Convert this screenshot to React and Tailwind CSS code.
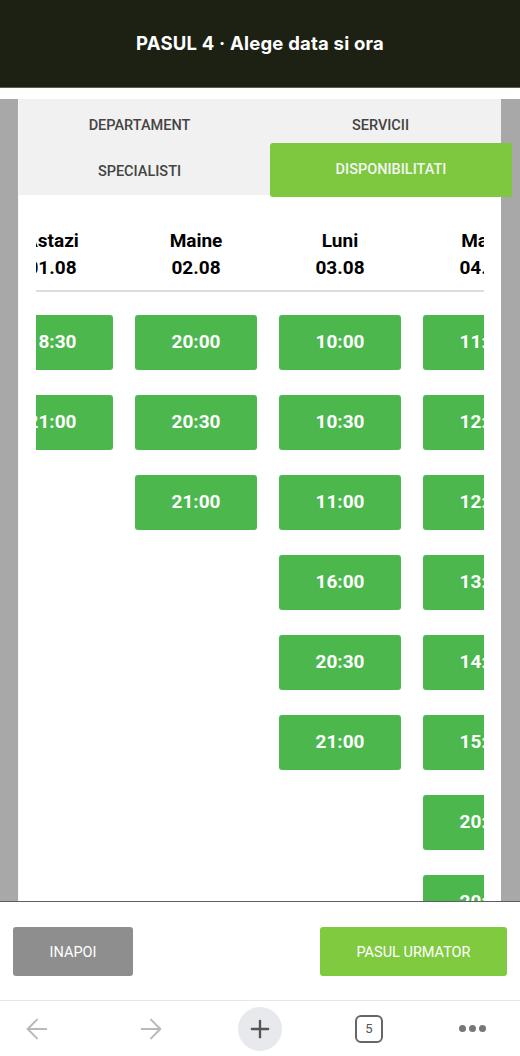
import { ArrowLeft, ArrowRight, Plus } from "lucide-react";

const days = [
  { name: "Astazi", date: "01.08", slots: ["18:30", "21:00"] },
  { name: "Maine", date: "02.08", slots: ["20:00", "20:30", "21:00"] },
  {
    name: "Luni",
    date: "03.08",
    slots: ["10:00", "10:30", "11:00", "16:00", "20:30", "21:00"],
  },
  {
    name: "Marti",
    date: "04.08",
    slots: ["11:00", "12:00", "12:30", "13:00", "14:00", "15:00", "20:00", "20:30", "21:00"],
  },
];

function DayColumn({ day }) {
  return (
    <div className="w-[122px] shrink-0 flex flex-col items-center text-[19px] font-bold leading-[27px] text-black">
      <span>{day.name}</span>
      <span>{day.date}</span>
    </div>
  );
}

function SlotColumn({ day }) {
  return (
    <div className="w-[122px] shrink-0 flex flex-col gap-[25px]">
      {day.slots.map((s) => (
        <div
          key={s}
          className="h-[55px] rounded-[3px] bg-[#4bb74c] flex items-center justify-center text-white text-[19px] font-bold"
        >
          {s}
        </div>
      ))}
    </div>
  );
}

export default function App() {
  return (
    <div className="w-[520px] h-[1056px] flex flex-col bg-white overflow-hidden font-['Roboto',sans-serif]">
      <header className="h-[88px] shrink-0 bg-[#1c2113] flex items-center justify-center border-b border-[#5a5f55]">
        <h1 className="text-white text-[18.5px] font-bold tracking-[0.2px] font-['Inter',sans-serif]">
          PASUL 4 · Alege data si ora
        </h1>
      </header>

      <main className="flex-1 min-h-0 pt-[11px] bg-white overflow-hidden flex flex-col">
        <div className="flex-1 min-h-0 flex bg-[#a8a8a8]">
          <div className="w-[18px] shrink-0" />
          <div className="w-[483px] shrink-0 bg-white flex flex-col border-l border-[#f8f8f8]">
            <div className="bg-[#f1f1f1] grid grid-cols-2 text-[14.5px] font-medium text-[#444]">
              <div className="h-[44px] pt-[10px] flex items-center justify-center">DEPARTAMENT</div>
              <div className="h-[44px] pt-[10px] flex items-center justify-center">SERVICII</div>
              <div className="h-[52px] pt-[6px] flex items-center justify-center">SPECIALISTI</div>
              <div className="h-[52px] relative">
                <div className="absolute left-[10px] -right-[11px] top-0 h-[54px] rounded-[3px] bg-[#7dc83e] flex items-center justify-center text-[#f4f4f4]">
                  DISPONIBILITATI
                </div>
              </div>
            </div>

            <div className="flex-1 min-h-0 pl-[17px] pr-[17px] pt-[32px]">
              <div className="w-[448px] overflow-hidden">
                <div className="flex gap-[22px] -ml-[45px]">
                  {days.map((d) => (
                    <DayColumn key={d.name} day={d} />
                  ))}
                </div>
                <div className="h-[2px] bg-[#dcdcdc] mt-[9px]" />
                <div className="flex gap-[22px] -ml-[45px] mt-[23px]">
                  {days.map((d) => (
                    <SlotColumn key={d.name} day={d} />
                  ))}
                </div>
              </div>
            </div>
          </div>
          <div className="flex-1" />
        </div>
      </main>

      <footer className="h-[99px] shrink-0 border-t border-[#5e5e5e] bg-white flex items-center justify-between px-[13px]">
        <button className="w-[120px] h-[49px] pt-[3px] rounded-[3px] bg-[#8e8e8e] text-white text-[14.5px]">
          INAPOI
        </button>
        <button className="w-[187px] h-[49px] pt-[3px] rounded-[3px] bg-[#7fca3f] text-white text-[14.5px]">
          PASUL URMATOR
        </button>
      </footer>

      <nav className="h-[56px] shrink-0 border-t border-[#e6e6e6] bg-white grid grid-cols-5 items-center justify-items-center">
        <ArrowLeft size={32} strokeWidth={1.5} className="text-[#b9b9b9] -ml-[30px]" />
        <ArrowRight size={32} strokeWidth={1.5} className="text-[#b9b9b9] -ml-[10px]" />
        <div className="w-[44px] h-[44px] rounded-full bg-[#e8e9ec] flex items-center justify-center">
          <Plus size={28} strokeWidth={2} className="text-[#555]" />
        </div>
        <div className="w-[28px] h-[28px] rounded-[6px] border-2 border-[#666] flex items-center justify-center text-[13px] text-[#555] ml-[10px]">
          5
        </div>
        <div className="flex gap-[3px] ml-[8px]">
          <span className="w-[7px] h-[7px] rounded-full bg-[#777]" />
          <span className="w-[7px] h-[7px] rounded-full bg-[#777]" />
          <span className="w-[7px] h-[7px] rounded-full bg-[#777]" />
        </div>
      </nav>
    </div>
  );
}
